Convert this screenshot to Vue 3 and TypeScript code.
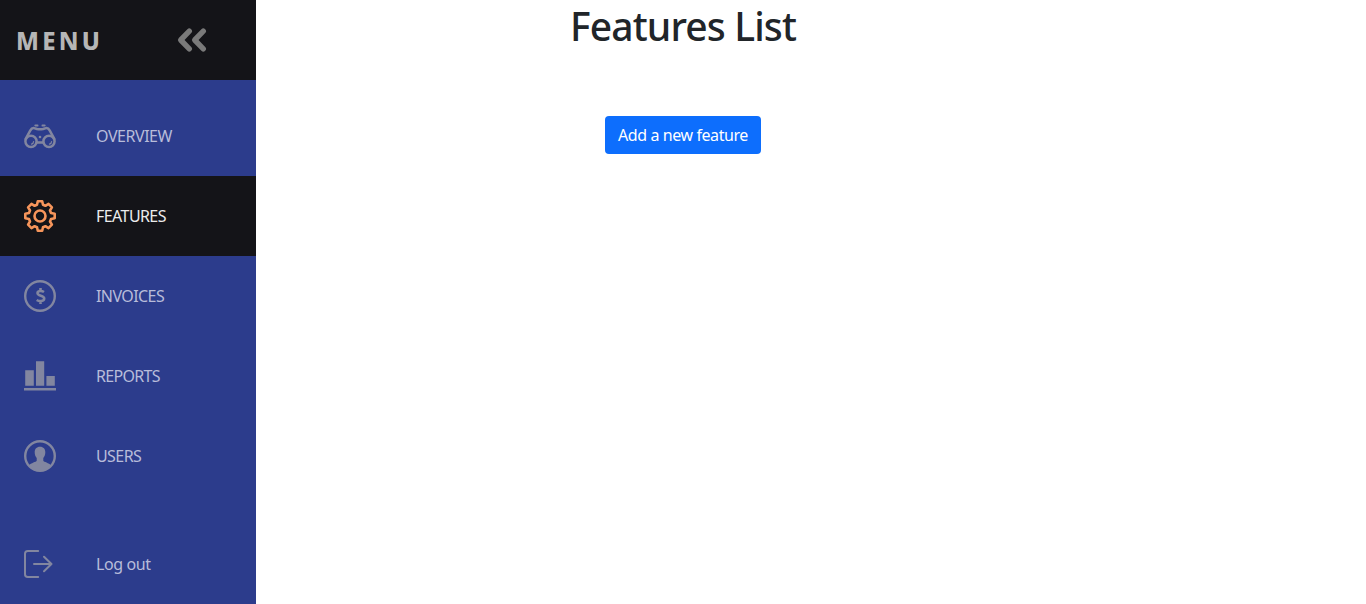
<script setup lang="ts">
type IconName = 'overview' | 'features' | 'invoices' | 'reports' | 'users'

interface NavItem {
  id: IconName
  label: string
}

const items: NavItem[] = [
  { id: 'overview', label: 'OVERVIEW' },
  { id: 'features', label: 'FEATURES' },
  { id: 'invoices', label: 'INVOICES' },
  { id: 'reports', label: 'REPORTS' },
  { id: 'users', label: 'USERS' },
]
const active: IconName = 'features'
</script>

<template>
  <div class="layout">
    <aside class="sidebar">
      <header class="brand">
        <span class="brand-text">MENU</span>
        <svg class="collapse" viewBox="0 0 32 32" fill="none" stroke="currentColor" stroke-width="5.4" stroke-linejoin="round" stroke-linecap="round">
          <path d="M13.3 7.200 4.700 16l8.600 8.800M27.300 7.200 18.700 16l8.600 8.800" />
        </svg>
      </header>
      <nav class="nav">
        <a v-for="item in items" :key="item.id" class="link" :class="{ active: item.id === active }">
          <svg v-if="item.id === 'overview'" class="icon" viewBox="0 0 32 32" fill="none" stroke="currentColor" stroke-width="2.5" stroke-linecap="round" stroke-linejoin="round">
            <circle cx="7" cy="21.300" r="5.600" />
            <circle cx="25" cy="21.300" r="5.600" />
            <path d="M1.700 18.800 6.200 10.600Q7.700 7.800 10 8.100L13 9Q16 9.600 19 9l3-.9Q24.300 7.800 25.800 10.600l4.500 8.200M12.800 22.400h6.400" />
            <path stroke-width="2" d="m11.300 5.400 2.200.2M20.700 5.400l-2.200.2" />
            <path stroke-width="1.200" d="M9.600 21.500q-.1 2.100-2.100 2.600M27.600 21.500q-.1 2.100-2.100 2.600" />
            <circle cx="16" cy="17" r="1.300" fill="currentColor" stroke="none" />
          </svg>
          <svg v-else-if="item.id === 'features'" class="icon" viewBox="0 0 32 32" fill="none" stroke="currentColor" stroke-width="2.600" stroke-linejoin="round">
            <path d="M13.800 1.300h4.400l.8 3.500 2.400 1 3.100-1.900 3.400 3.400L26 10.500l1 2.500 3.700.8v4.400L27 19l-1 2.500 1.900 3.200-3.400 3.400-3.100-1.900-2.400 1-.8 3.500h-4.400l-.8-3.500-2.400-1-3.100 1.900-3.400-3.400L6 21.500 5 19l-3.700-.8v-4.400L5 13l1-2.500-1.900-3.200 3.400-3.400 3.100 1.900 2.400-1z" />
            <circle cx="16" cy="16" r="5.500" />
          </svg>
          <svg v-else-if="item.id === 'invoices'" class="icon" viewBox="0 0 32 32" fill="none" stroke="currentColor">
            <circle cx="16" cy="16" r="14.800" stroke-width="2.400" />
            <path stroke-width="2.600" d="M20 12q-1.500-1-3.400-1c-2 0-3.100.8-3.100 2.100 0 3.400 6.700 1.900 6.700 5.500 0 1.600-1.500 2.500-3.600 2.500q-2.200 0-3.900-1.100M16.500 8v3.200M16.500 20.800V24" />
          </svg>
          <svg v-else-if="item.id === 'reports'" class="icon" viewBox="0 0 32 32" fill="currentColor">
            <path d="M1.200 10.300h8.600v15.400H1.200zM12 1.200h8.200v24.500H12zM22.400 16h8.400v9.700h-8.400zM0 27.900h32v2.700H0z" />
          </svg>
          <svg v-else class="icon" viewBox="0 0 32 32">
            <circle cx="16" cy="16" r="14.800" fill="none" stroke="currentColor" stroke-width="2.400" />
            <path fill="currentColor" d="M16 6.800c3.500 0 5.300 2.300 5.300 5.500 0 2.700-.7 4.300-2 5.700v2.700c.4 1.400 5.800 1.900 7.800 4.800C24.500 29 20.500 31 16 31S7.500 29 4.900 25.500c2-2.900 7.400-3.400 7.800-4.800V18c-1.300-1.400-2-3-2-5.700 0-3.200 1.800-5.500 5.300-5.500z" />
          </svg>
          <span class="label" :class="item.id">{{ item.label }}</span>
        </a>
      </nav>
      <a class="link logout">
        <svg class="icon" viewBox="0 0 32 32" fill="none" stroke="currentColor" stroke-width="2" stroke-linecap="round" stroke-linejoin="round">
          <path d="M14.200 3H3.800Q1 3 1 5.800v20.400Q1 29 3.800 29h10.400M10 16h17.500M20 8.700l7.500 7.300-7.500 7.200" />
        </svg>
        <span class="label out">Log out</span>
      </a>
    </aside>
    <main class="content">
      <h1 class="title">Features List</h1>
      <button class="add" type="button">Add a new feature</button>
    </main>
  </div>
</template>

<style>
body {
  margin: 0;
  background: #fff;
  overflow: hidden;
}
</style>

<style scoped>
.layout {
  display: grid;
  grid-template: 604px / 256px 854px 256px;
  font-family: 'Segoe UI', 'Noto Sans', 'Open Sans', sans-serif;
  font-size: 16px;
  line-height: 24px;
}
.sidebar {
  display: flex;
  flex-direction: column;
  background: #2c3c8c;
}
.brand {
  display: flex;
  align-items: center;
  height: 80px;
  box-sizing: border-box;
  padding: 0 48px 0 16px;
  justify-content: space-between;
  background: #141418;
}
.brand-text {
  color: #b6b6b6;
  font-size: 24px;
  font-weight: 800;
  letter-spacing: 3.3px;
  padding-top: 2px;
}
.collapse {
  width: 32px;
  height: 32px;
  color: #7a7a7a;
}
.nav {
  padding-top: 16px;
}
.link {
  display: flex;
  align-items: center;
  height: 80px;
  gap: 40px;
  padding-left: 24px;
  color: #b8bcda;
}
.icon {
  flex: none;
  width: 32px;
  height: 32px;
  color: #8286a0;
}
.active {
  background: #141418;
  color: #ececec;
}
.active .icon {
  color: #f6955b;
}
.label {
  white-space: nowrap;
  letter-spacing: -0.58px;
}
.label.overview {
  letter-spacing: -0.45px;
}
.label.reports {
  letter-spacing: -0.7px;
}
.label.out {
  letter-spacing: -0.4px;
}
.logout {
  margin-top: auto;
}
.content {
  display: flex;
  flex-direction: column;
  align-items: center;
}
.title {
  margin: 2px 0 66px;
  color: #212529;
  font-size: 39px;
  font-weight: 500;
  line-height: 48px;
  letter-spacing: -0.85px;
  white-space: nowrap;
}
.add {
  width: 156px;
  height: 38px;
  padding: 0;
  border: 0;
  border-radius: 4px;
  background: #0d6efd;
  color: #fff;
  font: inherit;
  letter-spacing: -0.42px;
  white-space: nowrap;
}
</style>
